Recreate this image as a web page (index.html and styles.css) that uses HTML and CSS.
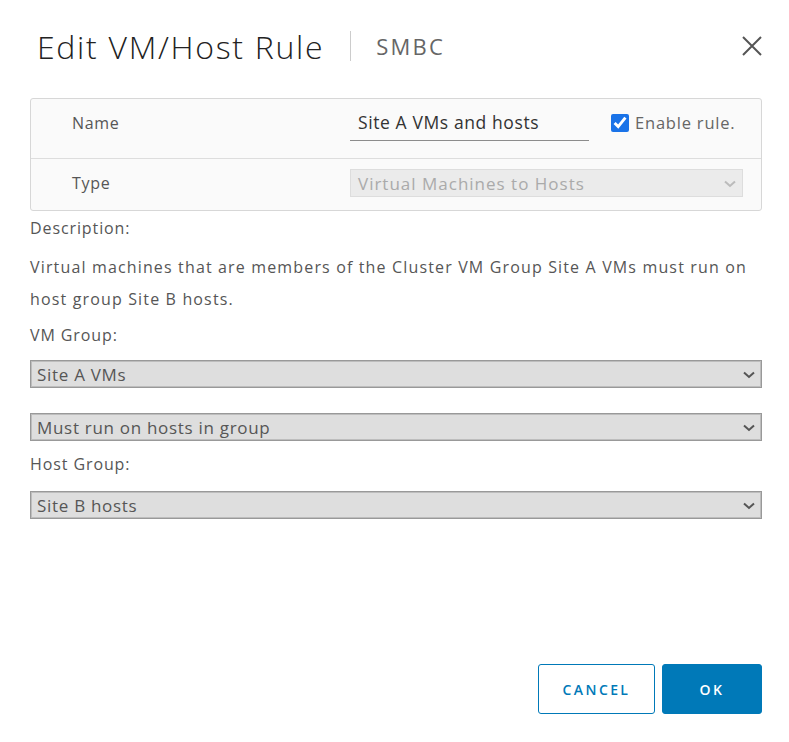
FILE: index.html
```html
<!DOCTYPE html>
<html>
<head>
<meta charset="utf-8">
<link rel="stylesheet" href="styles.css">
</head>
<body>
<div class="dialog">
  <header class="header">
    <h1 class="title">Edit VM/Host Rule</h1>
    <span class="divider"></span>
    <span class="subtitle">SMBC</span>
    <button class="close" aria-label="Close">
      <svg width="20" height="20" viewBox="0 0 20 20"><path d="M1 1 L19 19 M19 1 L1 19" stroke="#555" stroke-width="2" fill="none"/></svg>
    </button>
  </header>

  <div class="props">
    <div class="row row-name">
      <div class="label">Name</div>
      <div class="value">
        <input class="text-input" type="text" value="Site A VMs and hosts">
        <label class="check"><input type="checkbox" checked> Enable rule.</label>
      </div>
    </div>
    <div class="row row-type">
      <div class="label">Type</div>
      <div class="value">
        <div class="select disabled">Virtual Machines to Hosts<svg class="chev" width="12" height="8" viewBox="0 0 12 8"><path d="M1 1.5 L6 6 L11 1.5" stroke="#bbb" stroke-width="2" fill="none"/></svg></div>
      </div>
    </div>
  </div>

  <div class="field-label desc-label">Description:</div>
  <p class="desc">Virtual machines that are members of the Cluster VM Group Site A VMs must run on host group Site B hosts.</p>

  <div class="field-label vm-label">VM Group:</div>
  <div class="select full">Site A VMs<svg class="chev" width="12" height="8" viewBox="0 0 12 8"><path d="M1 1.5 L6 6 L11 1.5" stroke="#555" stroke-width="2" fill="none"/></svg></div>
  <div class="select full gap">Must run on hosts in group<svg class="chev" width="12" height="8" viewBox="0 0 12 8"><path d="M1 1.5 L6 6 L11 1.5" stroke="#555" stroke-width="2" fill="none"/></svg></div>
  <div class="field-label host-label">Host Group:</div>
  <div class="select full">Site B hosts<svg class="chev" width="12" height="8" viewBox="0 0 12 8"><path d="M1 1.5 L6 6 L11 1.5" stroke="#555" stroke-width="2" fill="none"/></svg></div>

  <footer class="footer">
    <button class="btn btn-outline">CANCEL</button>
    <button class="btn btn-primary">OK</button>
  </footer>
</div>
</body>
</html>
```

FILE: styles.css
```css
* { box-sizing: border-box; }
html, body { margin: 0; padding: 0; background: #fff; }
body {
  font-family: "Open Sans", "Liberation Sans", sans-serif;
  color: #565656;
  width: 789px;
  height: 742px;
}
.dialog {
  padding: 0 27px 0 30px;
  height: 742px;
  display: flex;
  flex-direction: column;
}
.header {
  display: flex;
  align-items: center;
  height: 98px;
  padding-bottom: 6px;
  padding-left: 7px;
}
.title {
  margin: 0;
  font-weight: 300;
  font-size: 32px;
  letter-spacing: 1.7px;
  color: #222;
}
.divider {
  width: 1px;
  height: 30px;
  background: #ccc;
  margin-left: 26px;
}
.subtitle {
  margin-left: 25px;
  font-size: 22px;
  letter-spacing: 2.2px;
  color: #666;
  font-weight: 400;
}
.close {
  margin-left: auto;
  background: none;
  border: 0;
  padding: 0;
  width: 20px;
  height: 20px;
  display: flex;
}
.props {
  border: 1px solid #d7d7d7;
  border-radius: 3px;
  background: #fafafa;
}
.row {
  display: flex;
  align-items: flex-start;
}
.row-name { height: 60px; border-bottom: 1px solid #ddd; padding-top: 11px; }
.row-type { height: 51px; padding-top: 10px; }
.label {
  width: 319px;
  padding-left: 41px;
  font-size: 16px;
  letter-spacing: 0.7px;
  line-height: 26px;
  color: #565656;
}
.row-type .label { line-height: 28px; }
.value {
  flex: 1;
  display: flex;
  align-items: center;
  padding-right: 18px;
}
.text-input {
  width: 239px;
  height: 31px;
  border: 0;
  border-bottom: 1px solid #8c8c8c;
  background: transparent;
  font: inherit;
  font-size: 17.5px;
  letter-spacing: 0.6px;
  color: #333;
  padding: 0 8px 6px;
  outline: none;
}
.check {
  margin-left: 22px;
  margin-top: -6px;
  display: flex;
  align-items: center;
  font-size: 16.5px;
  letter-spacing: 0.8px;
  color: #666;
  gap: 6px;
}
.check input {
  width: 18px;
  height: 18px;
  margin: 0;
  accent-color: #1a73e8;
}
.select {
  position: relative;
  display: flex;
  align-items: center;
  height: 28px;
  background: #dedede;
  border: 1px solid #999;
  box-shadow: inset 0 0 0 1px #bdbdbd;
  font-size: 17px;
  letter-spacing: 0.7px;
  color: #565656;
  padding-left: 6px;
}
.select .chev {
  position: absolute;
  right: 6px;
  top: 10px;
}
.select.disabled {
  flex: 1;
  background: #ebebeb;
  border-color: #ddd;
  box-shadow: none;
  color: #aaa;
  letter-spacing: 1px;
  padding-left: 7px;
}
.full { width: 732px; }
.gap { margin-top: 25px; }
.field-label {
  font-size: 16px;
  letter-spacing: 0.9px;
  line-height: 20px;
  color: #565656;
  margin: 0 0 15px;
}
.desc-label { margin: 7px 0 0; }
.vm-label { margin-top: 10px; }
.host-label { margin-top: 13px; margin-bottom: 17px; }
.desc {
  margin: 13px 0 0;
  font-size: 16px;
  letter-spacing: 1.15px;
  line-height: 32px;
  color: #565656;
}
.footer {
  margin-top: auto;
  margin-bottom: 28px;
  display: flex;
  justify-content: flex-end;
  gap: 7px;
}
.btn {
  height: 50px;
  border-radius: 3px;
  font-family: inherit;
  font-size: 14px;
  font-weight: 600;
  letter-spacing: 2.4px;
}
.btn-outline {
  width: 117px;
  background: #fff;
  border: 1px solid #0079b8;
  color: #0079b8;
}
.btn-primary {
  width: 100px;
  background: #0079b8;
  border: 1px solid #0079b8;
  color: #fff;
}
```
